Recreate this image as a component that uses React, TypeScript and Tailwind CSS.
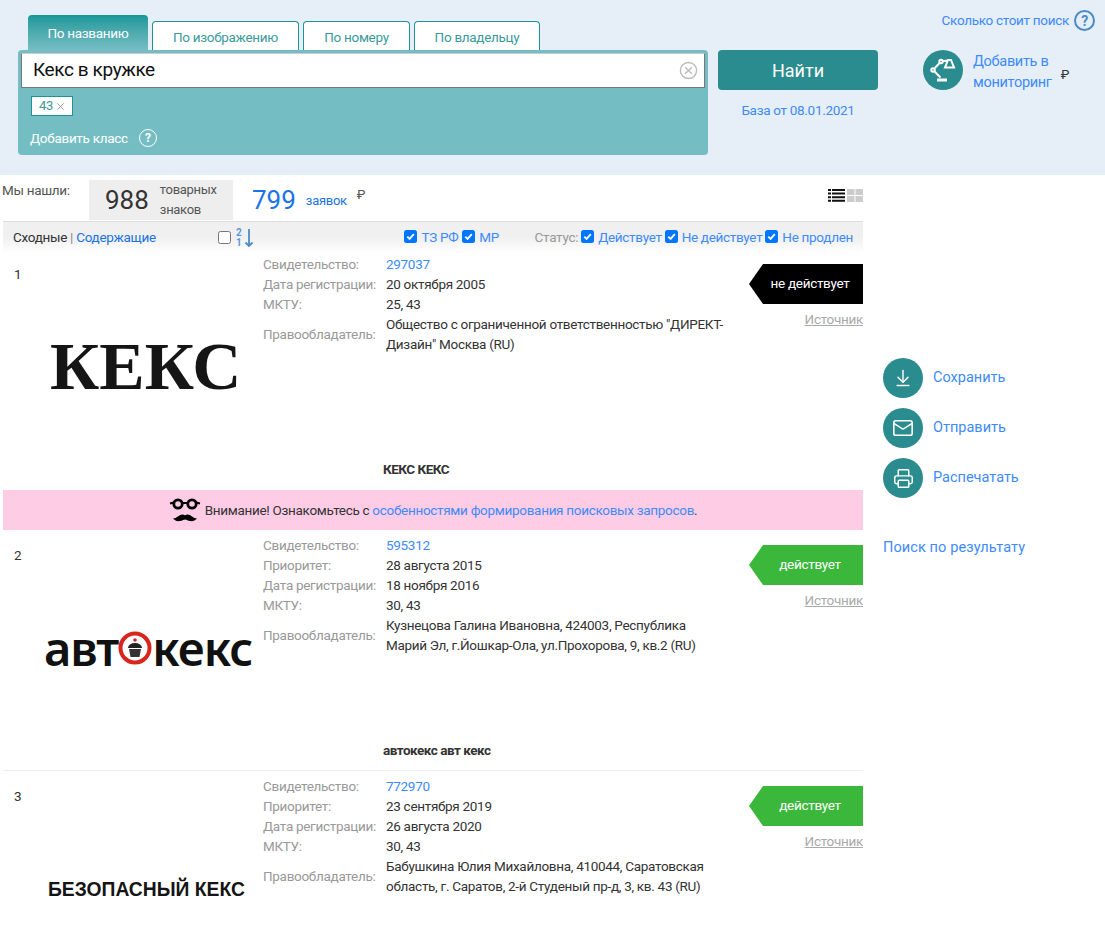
import { ArrowDownToLine, Mail, Printer } from 'lucide-react';

const font = 'font-["Roboto","Noto_Sans",sans-serif]';

function CheckBox({ on = true }: { on?: boolean }) {
  return (
    <span className={`inline-flex h-[13px] w-[13px] shrink-0 items-center justify-center rounded-[2.500px] ${on ? 'bg-[#0075ff]' : 'border border-[#767676] bg-white'}`}>
      {on && (
        <svg viewBox="0 0 12 12" className="h-[11px] w-[11px]">
          <path d="M2.500 6.200 5 8.700 9.600 3.400" fill="none" stroke="#fff" strokeWidth="2" />
        </svg>
      )}
    </span>
  );
}

function Tab({ label, w }: { label: string; w: string }) {
  return (
    <div className={`${w} flex h-[29px] items-center justify-center rounded-t-[4px] border border-b-0 border-[#1c9497] bg-white pt-[3px] text-[13.500px] text-[#3a9a9d]`}>
      {label}
    </div>
  );
}

function Lamp() {
  return (
    <svg viewBox="0 0 40 40" className="h-10 w-10" fill="none" stroke="#fff" strokeWidth="2">
      <path d="M25 10h3l3 7.500H22z" />
      <path d="M24.500 10.500 18 11.500l-8 8.500 7.500 7.500" />
      <circle cx="18" cy="11.500" r="1.700" fill="#2b8c8f" />
      <circle cx="10" cy="20" r="1.700" fill="#2b8c8f" />
      <path d="M14 30h10" strokeWidth="3" />
    </svg>
  );
}

function Mustache() {
  return (
    <svg viewBox="0 0 32 28" className="h-7 w-8">
      <circle cx="9" cy="8" r="4.200" fill="none" stroke="#000" strokeWidth="2.800" />
      <circle cx="23" cy="8" r="4.200" fill="none" stroke="#000" strokeWidth="2.800" />
      <path d="M13 7h6M1 7.500l4-1M27 6.500l4 1" stroke="#000" strokeWidth="2" />
      <path d="M4 22c3 1.500 6-4 10-3.500 1 .1 1.500.8 2 .8s1-.7 2-.8c4-.5 7 5 10 3.500-1 2.500-4 3.500-7 3-2-.3-3.500-1.500-5-1.500s-3 1.200-5 1.500c-3 .5-6-.5-7-3z" fill="#000" />
    </svg>
  );
}

function ActionLink({ icon, label }: { icon: React.ReactNode; label: string }) {
  return (
    <div className="flex h-10 items-center gap-[10px]">
      <span className="flex h-10 w-10 items-center justify-center rounded-full bg-[#2b8c8f] text-white">{icon}</span>
      <span className="-mt-[1px] text-[14.500px] tracking-normal text-[#3d8bfd]">{label}</span>
    </div>
  );
}

function Field({ label, value, link, lines }: { label: string; value: React.ReactNode; link?: boolean; lines?: boolean }) {
  return (
    <div className={`flex leading-5 ${lines ? 'items-center' : ''}`}>
      <div className="w-[123px] shrink-0 whitespace-nowrap text-[#999]">{label}</div>
      <div className={link ? 'text-[#3d8bfd]' : 'text-[#333]'}>{value}</div>
    </div>
  );
}

type Row = {
  num: number;
  logo: React.ReactNode;
  fields: { label: string; value: React.ReactNode; link?: boolean; lines?: boolean }[];
  dead?: boolean;
  caption?: string;
  logoPad: string;
  height: string;
};

function ResultRow({ num, logo, fields, dead, caption, logoPad, height }: Row) {
  return (
    <div className={`${height} overflow-hidden`}>
      <div className="flex h-[205px]">
        <div className="w-[260px] shrink-0 pl-[11px]">
          <div className="mt-[10px] leading-5 text-[#333]">{num}</div>
          <div className={logoPad}>{logo}</div>
        </div>
        <div className="w-[486px] shrink-0">
          {fields.map(f => (
            <Field key={f.label} {...f} />
          ))}
        </div>
        <div className="flex flex-1 flex-col items-end pt-[10px]">
          <div
            className={`flex h-10 w-[114px] items-center justify-center pb-[1px] pl-[8px] text-[13.500px] text-white ${dead ? 'bg-black' : 'bg-[#3bb83b]'} [clip-path:polygon(14px_0,100%_0,100%_100%,14px_100%,0_50%)]`}
          >
            {dead ? 'не действует' : 'действует'}
          </div>
          <div className="mt-[5px] text-[13.500px] leading-5 text-[#aaa] underline">Источник</div>
        </div>
      </div>
      {caption && <div className="pl-[380px] text-[13.500px] font-bold leading-5 tracking-[-0.5px] text-[#333]">{caption}</div>}
    </div>
  );
}

export default function App() {
  return (
    <div className={`h-[927px] w-[1105px] overflow-hidden bg-white text-[13.500px] tracking-[-0.3px] ${font}`}>
      <header className="relative flex h-[175px] bg-[#e6eef7] pl-[18px] pt-[15px]">
        <div className="w-[690px]">
          <div className="flex h-[35px] items-end gap-[4px] pl-[10px]">
            <div className="flex h-[35px] w-[120px] items-start justify-center rounded-t-[4px] bg-gradient-to-b from-[#12989a] to-[#74bec3] pt-[8px] text-[13.500px] text-white">
              По названию
            </div>
            <Tab label="По изображению" w="w-[147px]" />
            <Tab label="По номеру" w="w-[107px]" />
            <Tab label="По владельцу" w="w-[126px]" />
          </div>
          <div className="h-[105px] rounded-[4px] bg-[#74bec3] px-[3px] pt-[3px]">
            <div className="flex h-[35px] items-center justify-between border border-[#777] border-t-[#ccc] bg-white pl-[11px] pr-[6px] text-[19px] tracking-[-0.4px] text-[#111]">
              <span>Кекс в кружке</span>
              <svg viewBox="0 0 20 20" className="h-[19px] w-[19px]" fill="none" stroke="#bbb" strokeWidth="1.500">
                <circle cx="10" cy="10" r="8.500" />
                <path d="M6.500 6.500l7 7M13.500 6.500l-7 7" />
              </svg>
            </div>
            <div className="ml-[10px] mt-[8px] flex h-[20px] w-[42px] items-center justify-center gap-[3px] border border-[#1c9497] bg-white text-[13px] text-[#3a9a9d]">
              43
              <svg viewBox="0 0 10 10" className="h-[9px] w-[9px]" stroke="#888" strokeWidth="0.900">
                <path d="M1.500 1.500l7 7M8.500 1.500l-7 7" />
              </svg>
            </div>
            <div className="ml-[9px] mt-[12px] flex items-center gap-[11px] text-[13.500px] text-white">
              <span>Добавить класс</span>
              <span className="flex h-[18px] w-[18px] items-center justify-center rounded-full border-[1.500px] border-white text-[12px] font-bold leading-none">?</span>
            </div>
          </div>
        </div>
        <div className="ml-[10px] w-[160px] pt-[35px] text-center">
          <div className="flex h-10 items-center justify-center rounded-[4px] bg-[#2b8c8f] text-[18px] tracking-normal text-white">Найти</div>
          <div className="mt-[10px] text-[13.500px] leading-5 text-[#3d8bfd]">База от 08.01.2021</div>
        </div>
        <div className="ml-[45px] flex items-start gap-[10px] pt-[35px]">
          <span className="flex h-10 w-10 shrink-0 items-center justify-center rounded-full bg-[#2b8c8f]">
            <Lamp />
          </span>
          <div className="flex">
            <div className="pt-[1px] text-[14.500px] leading-[21px] text-[#3d8bfd]">
              Добавить в
              <br />
              мониторинг
            </div>
            <span className="ml-[9px] mt-[15px] text-[13px] leading-5 text-[#333]">₽</span>
          </div>
        </div>
        <div className="absolute right-[10px] top-[10px] flex items-center gap-[5px] text-[13.500px] text-[#3d8bfd]">
          Сколько стоит поиск
          <span className="flex h-[21px] w-[21px] items-center justify-center rounded-full border-2 border-[#4a8cc7] text-[14px] font-bold leading-none text-[#4a8cc7]">?</span>
        </div>
      </header>

      <div className="flex">
        <main className="ml-[3px] w-[860px] shrink-0">
          <div className="flex h-[46px] items-start pt-[5px]">
            <div className="w-[86px] -ml-[1px] mr-[1px] leading-5 text-[#555]">Мы нашли:</div>
            <div className="flex h-10 w-[144px] items-center bg-[#eee] pl-[16px]">
              <span className="text-[26px] leading-none tracking-normal text-[#333]">988</span>
              <span className="ml-[11px] text-[13px] leading-[20px] text-[#555]">
                товарных
                <br />
                знаков
              </span>
            </div>
            <span className="ml-[19px] mt-[4px] text-[26px] leading-8 tracking-normal text-[#1a73e8]">799</span>
            <span className="ml-[10px] mt-[11px] text-[13px] leading-5 text-[#1a73e8]">заявок</span>
            <span className="ml-[10px] mt-[5px] text-[13px] leading-5 text-[#555]">₽</span>
            <div className="ml-auto mt-[9px] flex items-center gap-[2px]">
              <svg viewBox="0 0 17 13" className="h-[13px] w-[17px]" fill="#111">
                <path d="M0 0h3v2H0zM4 0h13v2H4zM0 3.600h3v2H0zM4 3.600h13v2H4zM0 7.200h3v2H0zM4 7.200h13v2H4zM0 10.800h3v2H0zM4 10.800h13v2H4z" />
              </svg>
              <svg viewBox="0 0 16 13" className="h-[13px] w-[16px]" fill="#ccc">
                <path d="M0 0h7.500v6H0zM8.500 0H16v6H8.500zM0 7h7.500v6H0zM8.500 7H16v6H8.500z" />
              </svg>
            </div>
          </div>
          <div className="flex h-[32px] items-center whitespace-nowrap border-t border-[#ddd] bg-gradient-to-b from-[#f0f0f0] via-[#f0f0f0] to-white pl-[10px] pr-[10px] text-[13.500px]">
            <div className="w-[205px] shrink-0 text-[#333]">
              Сходные <span className="text-[#888]">|</span> <span className="text-[#1a73e8]">Содержащие</span>
            </div>
            <CheckBox on={false} />
            <div className="ml-[5px] flex flex-col text-center text-[10px] font-bold leading-[10px] text-[#5a9ad6]">
              <span>2</span>
              <span>1</span>
            </div>
            <svg viewBox="0 0 10 20" className="ml-[3px] h-5 w-[10px] shrink-0" fill="none" stroke="#4a8cc7" strokeWidth="1.800">
              <path d="M5 1v17M1.500 14.500 5 18l3.500-3.500" />
            </svg>
            <div className="ml-[150px]"><CheckBox /></div>
            <span className="ml-[4px] text-[#3d8bfd]">ТЗ РФ</span>
            <div className="ml-[4px]"><CheckBox /></div>
            <span className="ml-[4px] text-[#3d8bfd]">МР</span>
            <span className="ml-auto text-[#999]">Статус:</span>
            <div className="ml-[3px]"><CheckBox /></div>
            <span className="ml-[4px] text-[#3d8bfd]">Действует</span>
            <div className="ml-[3px]"><CheckBox /></div>
            <span className="ml-[4px] text-[#3d8bfd]">Не действует</span>
            <div className="ml-[3px]"><CheckBox /></div>
            <span className="ml-[4px] text-[#3d8bfd]">Не продлен</span>
          </div>

          <ResultRow
            num={1}
            dead
            height="h-[237px] pt-[1px]"
            logoPad="pt-[52px] pl-[36px]"
            caption="КЕКС КЕКС"
            logo={<div className='font-["Liberation_Serif",serif] text-[68px] font-bold leading-[60px] tracking-normal text-[#151515]'>КЕКС</div>}
            fields={[
              { label: 'Свидетельство:', value: '297037', link: true },
              { label: 'Дата регистрации:', value: '20 октября 2005' },
              { label: 'МКТУ:', value: '25, 43' },
              { label: 'Правообладатель:', value: <>Общество с ограниченной ответственностью "ДИРЕКТ-<br />Дизайн" Москва (RU)</>, lines: true },
            ]}
          />
          <div className="flex h-10 items-center justify-center bg-[#ffcce6] text-[13.500px] text-[#333]">
            <Mustache />
            <span className="ml-[4px]">
              Внимание! Ознакомьтесь с <span className="text-[#3d8bfd]">особенностями формирования поисковых запросов</span>.
            </span>
          </div>
          <ResultRow
            num={2}
            height="h-[241px] border-b border-[#eee] pt-[5px]"
            logoPad="pt-[58px] pl-[30px] -mr-[20px]"
            caption="автокекс авт кекс"
            logo={
              <div className='flex items-center font-["Noto_Sans",sans-serif] text-[47px] font-semibold leading-[50px] tracking-[-1px] text-[#111]'>
                авт
                <svg viewBox="0 0 34 34" className="h-[34px] w-[34px] shrink-0">
                  <circle cx="17" cy="17" r="14.500" fill="#fff" stroke="#d9261c" strokeWidth="4" />
                  <circle cx="17" cy="9" r="1.800" fill="#d9261c" />
                  <path d="M10 17a7 5 0 0 1 14 0z" fill="#222" />
                  <path d="M11 18h12l-1.500 8h-9z" fill="#333" />
                </svg>
                кекс
              </div>
            }
            fields={[
              { label: 'Свидетельство:', value: '595312', link: true },
              { label: 'Приоритет:', value: '28 августа 2015' },
              { label: 'Дата регистрации:', value: '18 ноября 2016' },
              { label: 'МКТУ:', value: '30, 43' },
              { label: 'Правообладатель:', value: <>Кузнецова Галина Ивановна, 424003, Республика<br />Марий Эл, г.Йошкар-Ола, ул.Прохорова, 9, кв.2 (RU)</>, lines: true },
            ]}
          />
          <ResultRow
            num={3}
            height="h-[160px] pt-[5px]"
            logoPad="pt-[72px] pl-[34px] -mr-[20px]"
            logo={<div className='whitespace-nowrap font-["Liberation_Sans",sans-serif] text-[19.300px] font-bold leading-6 tracking-normal text-[#151515]'>БЕЗОПАСНЫЙ КЕКС</div>}
            fields={[
              { label: 'Свидетельство:', value: '772970', link: true },
              { label: 'Приоритет:', value: '23 сентября 2019' },
              { label: 'Дата регистрации:', value: '26 августа 2020' },
              { label: 'МКТУ:', value: '30, 43' },
              { label: 'Правообладатель:', value: <>Бабушкина Юлия Михайловна, 410044, Саратовская<br />область, г. Саратов, 2-й Студеный пр-д, 3, кв. 43 (RU)</>, lines: true },
            ]}
          />
        </main>
        <aside className="ml-[20px] pt-[183px]">
          <div className="flex flex-col gap-[10px]">
            <ActionLink icon={<ArrowDownToLine size={20} strokeWidth={1.700} />} label="Сохранить" />
            <ActionLink icon={<Mail size={22} strokeWidth={1.700} />} label="Отправить" />
            <ActionLink icon={<Printer size={21} strokeWidth={1.700} />} label="Распечатать" />
          </div>
          <div className="mt-[40px] text-[14.500px] leading-5 tracking-[0.1px] text-[#3d8bfd]">Поиск по результату</div>
        </aside>
      </div>
    </div>
  );
}
